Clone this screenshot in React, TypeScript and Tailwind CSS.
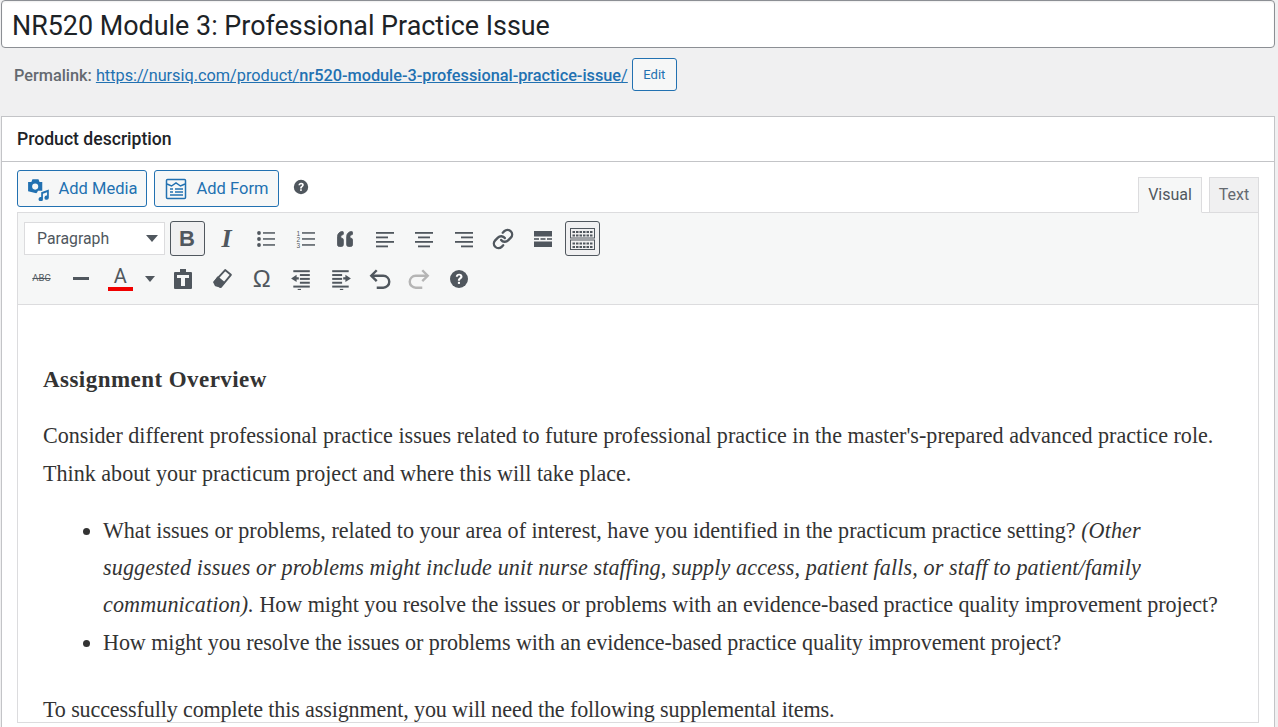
import React from "react";
import { Link as LinkIcon, Quote } from "lucide-react";

const UI = "font-['Roboto','Noto_Sans',sans-serif]";

// toolbar icon shell
function Tool({ children, active }: { children: React.ReactNode; active?: boolean }) {
  return (
    <div
      className={
        active
          ? "flex h-[35px] w-[35px] items-center justify-center rounded-[3px] border border-[#50575e] bg-[#f0f0f1] text-[#50575e]"
          : "flex h-[35px] w-[35px] items-center justify-center border border-transparent text-[#50575e]"
      }
    >
      {children}
    </div>
  );
}

function Lines({ rows }: { rows: [number, number][] }) {
  return (
    <svg width="20" height="20" viewBox="0 0 20 20" fill="#50575e">
      {rows.map(([x, w], i) => (
        <rect key={i} x={x} y={3 + i * 4.5} width={w} height="1.8" />
      ))}
    </svg>
  );
}

function BulletList() {
  return (
    <svg width="20" height="20" viewBox="0 0 20 20" fill="#50575e">
      <circle cx="3" cy="4" r="1.9" />
      <circle cx="3" cy="10" r="1.9" />
      <circle cx="3" cy="16" r="1.9" />
      <rect x="7" y="3.200" width="12" height="1.500" />
      <rect x="7" y="9.200" width="12" height="1.500" />
      <rect x="7" y="15.200" width="12" height="1.500" />
    </svg>
  );
}

function NumberList() {
  return (
    <svg width="20" height="20" viewBox="0 0 20 20" fill="#50575e">
      <text x="0.500" y="6.500" fontSize="6.500" fontFamily="Liberation Sans">1</text>
      <text x="0.500" y="12.500" fontSize="6.500" fontFamily="Liberation Sans">2</text>
      <text x="0.500" y="18.500" fontSize="6.500" fontFamily="Liberation Sans">3</text>
      <rect x="6" y="3.200" width="13" height="1.500" />
      <rect x="6" y="9.200" width="13" height="1.500" />
      <rect x="6" y="15.200" width="13" height="1.500" />
    </svg>
  );
}

function HelpCircle({ size = 20 }: { size?: number }) {
  return (
    <svg width={size} height={size} viewBox="0 0 20 20">
      <circle cx="10" cy="10" r="9" fill="#50575e" />
      <path d="M6.800 7.800C6.900 5.800 8.200 4.700 10.200 4.700c2 0 3.300 1.100 3.300 2.800 0 2.400-2.500 2.300-2.500 4.300H8.900c0-3 2.400-2.900 2.400-4.200 0-.7-.5-1.100-1.200-1.100-.8 0-1.200.5-1.300 1.300z" fill="#fff" />
      <rect x="8.900" y="12.800" width="2.100" height="2.100" fill="#fff" />
    </svg>
  );
}

function Paragraphs() {
  return (
    <div className="font-['Liberation_Serif',serif] text-[22.1px] leading-[37.3px] text-[#333]">
      <p className="pt-[56px] text-[23px] font-bold tracking-[0.45px]">Assignment Overview</p>
      <p className="mt-[19px]">
        Consider different professional practice issues related to future professional practice in the master's-prepared advanced practice role. Think about your practicum project and where this will take place.
      </p>
      <ul className="mt-[20px] list-disc pl-[60px]">
        <li>
          <span className="tracking-[-0.02px]">What issues or problems, related to your area of interest, have you identified in the practicum practice setting?</span> <em className="tracking-[0.12px]">(Other<br />suggested issues or problems might include unit nurse staffing, supply access, patient falls, or staff to patient/family communication).</em>{" "}
          <span className="tracking-[-0.07px]">How might you resolve the issues or problems with an evidence-based practice quality improvement project?</span>
        </li>
        <li className="tracking-[-0.07px]">How might you resolve the issues or problems with an evidence-based practice quality improvement project?</li>
      </ul>
      <p className="mt-[30px] tracking-[-0.13px]">To successfully complete this assignment, you will need the following supplemental items.</p>
    </div>
  );
}

export default function App() {
  return (
    <div className={`${UI} h-[727px] w-[1278px] overflow-hidden bg-[#f0f0f1] pl-px pr-[3px]`}>
      <div className="flex h-[48px] items-center rounded-[4px] border border-[#8c8f94] bg-white pl-[10px] pt-[5px] text-[26.900px] text-[#1d2327] shadow-[inset_0_1px_2px_rgba(0,0,0,0.07)]">
        NR520 Module 3: Professional Practice Issue
      </div>

      <div className="flex h-[68px] items-start pl-[13px] pt-[10px] text-[16.300px] text-[#646970]">
        <div className="flex h-[33px] items-center">
          <span className="pt-[3px] font-medium">Permalink:</span>
          <span className="ml-[4px] pt-[3px] text-[#2271b1] underline">
            https://nursiq.com/product/<span className="font-medium">nr520-module-3-professional-practice-issue</span>/
          </span>
          <div className="ml-[4px] flex h-[33px] w-[45px] items-center justify-center rounded-[3px] border border-[#2271b1] bg-[#f6f7f7] text-[13px] text-[#2271b1]">
            Edit
          </div>
        </div>
      </div>

      <div className="h-[620px] border border-[#c3c4c7] bg-white">
        <div className="flex h-[45px] items-center border-b border-[#c3c4c7] pl-[15px] pt-px text-[17.600px] font-medium text-[#1d2327]">
          Product description
        </div>

        <div className="relative flex h-[50px] items-start pl-[15px] pt-[8px]">
          <div className="flex h-[37px] w-[130px] items-center justify-center gap-[8px] rounded-[3px] border border-[#2271b1] bg-[#f6f7f7] pt-px text-[16.500px] text-[#2271b1]">
            <svg width="24" height="24" viewBox="0 0 22 22" fill="#2271b1">
              <path fillRule="evenodd" d="M1 4.500h3l1-2.500h5.500l1 2.500H14v8H10a5 5 0 0 1-1.500 2.500L1 13zM7.500 6a2.800 2.800 0 1 0 0 5.600 2.800 2.800 0 0 0 0-5.600z" />
              <path d="M13 14l7-2.500v7.500a2 2 0 1 1-1.600-2v-3l-3.800 1.300v5a2 2 0 1 1-1.600-2z" />
            </svg>
            Add Media
          </div>
          <div className="ml-[7px] flex h-[37px] w-[125px] items-center justify-center gap-[10px] rounded-[3px] border border-[#2271b1] bg-[#f6f7f7] pt-px text-[16.500px] text-[#2271b1]">
            <svg width="22" height="22" viewBox="0 0 22 22" fill="none" stroke="#2271b1" strokeWidth="1.500">
              <rect x="1.500" y="1.500" width="19" height="19" rx="1" />
              <path d="M2 6l4.500 2 4.500-3 4.500 3 4.500-2M5 11h3M10 11h8M5 14h3M10 14h8M5 17h13" />
            </svg>
            Add Form
          </div>
          <div className="ml-[14px] mt-[8px] flex h-[18px] items-center">
            <HelpCircle size={16} />
          </div>
          <div className="absolute right-[15px] bottom-0 flex items-end gap-[7px] text-[16px] text-[#50575e]">
            <div className="-mb-px flex h-[36px] w-[64px] items-center justify-center border border-[#dcdcde] border-b-[#f6f7f7] bg-[#f6f7f7]">
              Visual
            </div>
            <div className="-mb-px flex h-[36px] w-[50px] items-center justify-center border border-[#dcdcde] bg-[#f0f0f1] text-[#646970]">
              Text
            </div>
          </div>
        </div>

        <div className="mx-[15px] border-x border-[#dcdcde]">
          <div className="flex h-[93px] flex-col gap-[5px] border-y border-[#dcdcde] bg-[#f6f7f7] pl-[6px] pt-[8px]">
            <div className="flex h-[35px] items-center gap-[4.500px]">
              <div className="flex h-[33px] w-[141px] items-center justify-between border border-[#dcdcde] bg-white pl-[12px] pr-[6px] text-[15.800px] text-[#50575e]">
                Paragraph
                <span className="h-0 w-0 border-x-[6px] border-t-[7px] border-x-transparent border-t-[#50575e]" />
              </div>
              <Tool active>
                <span className="font-['Liberation_Sans',sans-serif] text-[22px] leading-none font-bold">B</span>
              </Tool>
              <Tool>
                <span className="font-['Liberation_Serif',serif] text-[26px] leading-none font-bold italic">I</span>
              </Tool>
              <Tool><BulletList /></Tool>
              <Tool><NumberList /></Tool>
              <Tool><Quote size={20} fill="#50575e" strokeWidth={1} className="rotate-180" /></Tool>
              <Tool><Lines rows={[[1, 18], [1, 12], [1, 18], [1, 12]]} /></Tool>
              <Tool><Lines rows={[[1, 18], [4, 12], [1, 18], [4, 12]]} /></Tool>
              <Tool><Lines rows={[[1, 18], [7, 12], [1, 18], [7, 12]]} /></Tool>
              <Tool><LinkIcon size={22} strokeWidth={2.600} /></Tool>
              <Tool>
                <svg width="20" height="20" viewBox="0 0 20 20" fill="#50575e">
                  <rect x="1" y="2" width="18" height="5.500" />
                  <rect x="1" y="9.200" width="5" height="1.600" />
                  <rect x="7.500" y="9.200" width="5" height="1.600" />
                  <rect x="14" y="9.200" width="5" height="1.600" />
                  <rect x="1" y="12.500" width="18" height="5.500" />
                </svg>
              </Tool>
              <Tool active>
                <svg width="27" height="24" viewBox="0 0 27 24" fill="none" stroke="#50575e">
                  <rect x="1.500" y="1.500" width="24" height="9.500" />
                  <rect x="1.500" y="13" width="24" height="9.500" />
                  <path d="M3.500 5h20M3.500 8.500h20M3.500 16.500h20M3.500 20h20" strokeWidth="2" strokeDasharray="2.500 1" />
                </svg>
              </Tool>
            </div>
            <div className="flex h-[35px] items-center gap-[4.400px]">
              <Tool>
                <span className="text-[9.500px] text-[#50575e] line-through">ABC</span>
              </Tool>
              <Tool><span className="h-[3px] w-[16px] bg-[#50575e]" /></Tool>
              <div className="ml-[4px] flex h-[35px] w-[27px] flex-col items-center justify-center">
                <span className="text-[20px] leading-[19px] text-[#50575e]">A</span>
                <span className="mt-[1px] h-[4px] w-[25px] bg-[#f00000]" />
              </div>
              <div className="flex h-[35px] w-[23px] items-center justify-center">
                <span className="h-0 w-0 border-x-[5px] border-t-[6px] border-x-transparent border-t-[#50575e]" />
              </div>
              <Tool>
                <svg width="22" height="22" viewBox="0 0 22 22" fill="#50575e">
                  <path fillRule="evenodd" d="M8 1h6v3h5a1 1 0 0 1 1 1v15a1 1 0 0 1-1 1H3a1 1 0 0 1-1-1V5a1 1 0 0 1 1-1h5zM5 7v3h4v8h4v-8h4V7z" />
                </svg>
              </Tool>
              <Tool>
                <svg width="21" height="21" viewBox="0 0 20 20" fill="none" stroke="#50575e" strokeWidth="1.800" strokeLinejoin="round">
                  <path d="M12.500 2l5.500 4.500-9.500 11.500-5-1.500-1.500-3z" />
                  <path d="M2.500 13.500l5.500 4.500 3.500-4-6-5z" fill="#50575e" />
                </svg>
              </Tool>
              <Tool><span className="font-['Liberation_Sans',sans-serif] text-[24px] leading-none text-[#50575e]">Ω</span></Tool>
              <Tool>
                <svg width="22" height="22" viewBox="0 0 20 20" fill="#50575e">
                  <rect x="3" y="2" width="15" height="1.800" />
                  <rect x="9" y="5.500" width="9" height="1.800" />
                  <path d="M1 9.500l5-3.300v2.300h2v2H6v2.300z" />
                  <rect x="9" y="9" width="9" height="1.800" />
                  <rect x="9" y="12.500" width="9" height="1.800" />
                  <rect x="3" y="16" width="15" height="1.800" />
                  <rect x="7" y="19" width="3" height="1" />
                </svg>
              </Tool>
              <Tool>
                <svg width="22" height="22" viewBox="0 0 20 20" fill="#50575e">
                  <rect x="2" y="2" width="15" height="1.800" />
                  <rect x="2" y="5.500" width="9" height="1.800" />
                  <path d="M19 9.500l-5-3.300v2.300h-2v2h2v2.300z" />
                  <rect x="2" y="9" width="9" height="1.800" />
                  <rect x="2" y="12.500" width="9" height="1.800" />
                  <rect x="2" y="16" width="15" height="1.800" />
                  <rect x="9" y="19" width="3" height="1" />
                </svg>
              </Tool>
              <Tool>
                <svg width="24" height="24" viewBox="0 0 22 22" fill="none" stroke="#50575e" strokeWidth="2.200">
                  <path d="M3 8h11a5 5 0 0 1 0 11H8" />
                  <path d="M8 3L3 8l5 5" />
                </svg>
              </Tool>
              <Tool>
                <svg width="24" height="24" viewBox="0 0 22 22" fill="none" stroke="#b5b5b5" strokeWidth="2.200">
                  <path d="M19 8H8a5 5 0 0 0 0 11h6" />
                  <path d="M14 3l5 5-5 5" />
                </svg>
              </Tool>
              <Tool><HelpCircle /></Tool>
            </div>
          </div>

          <div className="h-[418px] overflow-hidden border-b border-[#dcdcde] bg-white pl-[25px] pr-[20px]">
            <Paragraphs />
          </div>
        </div>
      </div>
    </div>
  );
}
